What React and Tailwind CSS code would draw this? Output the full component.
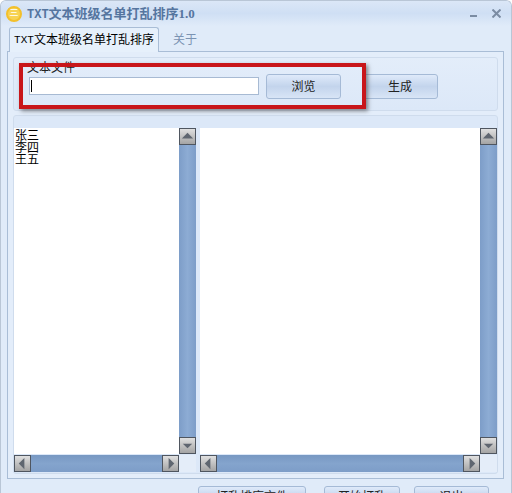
import React from 'react';

const cjk = { fontFamily: '"Liberation Serif", "Noto Sans CJK SC", serif' };

function Arrow({ dir }) {
    const points = {
        up: '2,10 8,4 14,10',
        down: '3,6 8,11 13,6',
        left: '10,2 4,8 10,14',
        right: '6,2 12,8 6,14',
    };
    return (
        <div className="w-[17px] h-[17px] shrink-0 border border-[#4f5660] bg-gradient-to-b from-[#e0e0e0] to-[#a4a4a4] flex items-center justify-center">
            <svg width="15" height="15" viewBox="0 0 16 16">
                <polygon points={points[dir]} fill="#5f6670" />
            </svg>
        </div>
    );
}

function VScroll() {
    return (
        <div className="w-[17px] h-full flex flex-col shrink-0">
            <Arrow dir="up" />
            <div className="flex-1 bg-gradient-to-r from-[#7d9dc8] via-[#8dacd4] to-[#7d9dc8]" />
            <Arrow dir="down" />
        </div>
    );
}

function HScroll() {
    return (
        <div className="h-[17px] flex-1 flex min-w-0">
            <Arrow dir="left" />
            <div className="flex-1 bg-gradient-to-b from-[#7798c2] via-[#84a4cd] to-[#7d9dc8]" />
            <Arrow dir="right" />
        </div>
    );
}

function Btn({ children, className }) {
    return (
        <button className={`rounded-[3px] border border-[#a5bad6] bg-gradient-to-b from-[#dfeafa] via-[#c3d4ec] to-[#d8e5f6] text-[12px] text-[#222] flex items-center justify-center ${className}`}>
            {children}
        </button>
    );
}

function ListPane({ width, lines }) {
    return (
        <div className="flex flex-col h-full shrink-0" style={{ width }}>
            <div className="flex-1 flex min-h-0">
                <div className="flex-1 bg-white text-[12px] leading-[12px] text-black pl-[1px] pt-[2px] overflow-hidden">
                    {lines.map(line => <div key={line}>{line}</div>)}
                </div>
                <VScroll />
            </div>
            <div className="flex mt-[1px]">
                <HScroll />
                <div className="w-[17px] h-[17px] shrink-0 bg-[#e4edf9]" />
            </div>
        </div>
    );
}

export default function App() {
    return (
        <div className="relative w-[512px] h-[493px] overflow-hidden bg-[#e0ebf9] border-x border-t border-[#b9c6d6] rounded-t-[6px]" style={cjk}>
            {/* Title bar */}
            <div className="h-[25px] flex items-center pl-[5px] pr-[10px] bg-gradient-to-b from-[#dbe7f7] via-[#cfdff4] to-[#e0ebf9]">
                <div className="w-[16px] h-[16px] rounded-full bg-[#f7d354] border-2 border-[#f3c02c] flex items-center justify-center text-[9px] leading-none text-white">三</div>
                <span className="ml-[5px] text-[13px] font-bold text-[#55759f]">
                    <span className="text-[12px]" style={{ fontFamily: '"Liberation Mono", monospace' }}>TXT</span>文本班级名单打乱排序1.0
                </span>
                <div className="ml-auto flex items-center gap-[15px]">
                    <div className="w-[7px] h-[2px] bg-[#7b8ca3] mt-[5px]" />
                    <svg width="9" height="9" viewBox="0 0 9 9">
                        <path d="M0.5 0.5 L8.5 8.5 M8.5 0.5 L0.5 8.5" stroke="#7b8ca3" strokeWidth="2" fill="none" />
                    </svg>
                </div>
            </div>

            {/* Tabs */}
            <div className="h-[26px] flex items-end pl-[8px] -mb-[1px] relative z-10">
                <div className="h-[25px] w-[150px] border border-b-0 border-[#a9bdd6] rounded-t-[3px] bg-[#e6f0fb] flex items-center justify-center text-[12px] text-black whitespace-nowrap">
                    <span className="text-[11px]" style={{ fontFamily: '"Liberation Mono", monospace' }}>TXT</span>文本班级名单打乱排序
                </div>
                <div className="h-[25px] ml-[14px] flex items-center text-[12px] text-[#7b93b3]">关于</div>
            </div>

            {/* Tab page */}
            <div className="ml-[6px] w-[497px] h-[428px] border border-[#a9bdd6] bg-[#e3edfa] px-[5px] pt-[5px] flex flex-col">
                <div className="relative h-[54px] border border-[#cfdced] rounded-[3px] bg-gradient-to-b from-[#e3edfa] to-[#dce8f8] flex items-start pl-[15px] pt-[19px] shrink-0">
                    <span className="absolute left-[13px] top-[3px] text-[12px] leading-[14px] text-[#222]">文本文件</span>
                    <div className="w-[230px] h-[18px] bg-white border border-[#a7bad3] flex items-center pl-[1px]">
                        <div className="w-[1px] h-[12px] bg-black" />
                    </div>
                    <Btn className="ml-[7px] w-[75px] h-[25px] -mt-[3px]">浏览</Btn>
                    <Btn className="ml-[21px] w-[76px] h-[25px] -mt-[3px]">生成</Btn>
                </div>
                <div className="mt-[4px] h-[359px] border border-[#cfdced] rounded-[3px] bg-[#dce8f8] pt-[12px] pb-[1px] flex gap-[4px] shrink-0">
                    <ListPane width={182} lines={['张三', '李四', '王五']} />
                    <ListPane width={297} lines={[]} />
                </div>
            </div>

            {/* Bottom buttons */}
            <div className="flex pl-[197px] mt-[7px]">
                <Btn className="w-[108px] h-[22px] shrink-0">打乱排序文件</Btn>
                <Btn className="ml-[18px] w-[76px] h-[22px] shrink-0">开始打乱</Btn>
                <Btn className="ml-[14px] w-[75px] h-[22px] shrink-0">退出</Btn>
            </div>

            {/* Red annotation box */}
            <div className="absolute left-[18px] top-[62px] w-[347px] h-[46px] border-[4px] border-[#c8161a] shadow-[2px_2px_4px_rgba(60,60,60,0.6)]" />
        </div>
    );
}
